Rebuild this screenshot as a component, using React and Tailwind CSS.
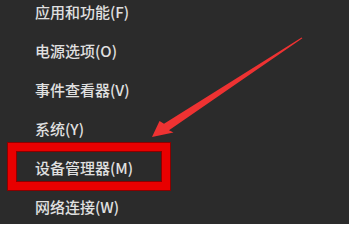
import React from 'react';

const items = [
    '应用和功能(F)',
    '电源选项(O)',
    '事件查看器(V)',
    '系统(Y)',
    '设备管理器(M)',
    '网络连接(W)',
];

function App() {
    return (
        <div
            className="relative w-[349px] h-[224px] overflow-hidden bg-[#2b2b2b]"
            style={{ fontFamily: '"Noto Sans CJK SC", "Noto Sans", sans-serif' }}
        >
            <ul className="flex flex-col gap-[15px] pl-[35px]">
                {items.map(item => (
                    <li key={item} className="h-[24px] flex items-center text-[15px] font-medium text-[#e0e0e0]">
                        {item}
                    </li>
                ))}
            </ul>

            {/* red highlight box */}
            <div className="absolute left-[8px] top-[143px] w-[162px] h-[47px] border-[8px] border-[#e80000] shadow-[0_0_0_1px_#8a0000,inset_0_0_0_1px_#8a0000]" />

            {/* arrow */}
            <svg className="absolute left-0 top-0" width="349" height="224" viewBox="0 0 349 224">
                <polygon
                    points="302.4,38.3 169,130.3 173.5,132.5 152,137 159.5,121 164,123.8 301.6,37.6"
                    fill="#ee3232"
                />
            </svg>
        </div>
    );
}

export default App;
